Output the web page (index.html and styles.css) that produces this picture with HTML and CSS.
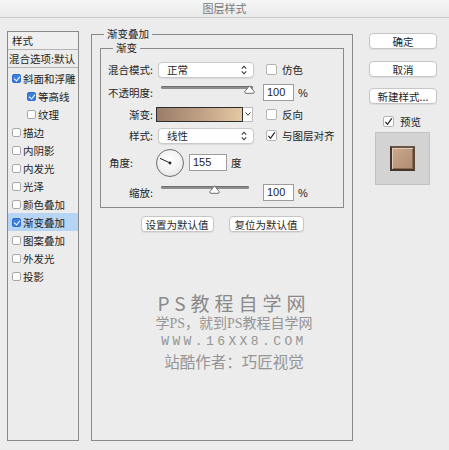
FILE: index.html
```html
<!DOCTYPE html>
<html lang="zh-CN">
<head>
<meta charset="utf-8">
<title>图层样式</title>
<link rel="stylesheet" href="styles.css">
</head>
<body>
<div class="window">
  <div class="titlebar">图层样式</div>
  <div class="content">
    <div class="styles-panel">
      <div class="sp-head">样式</div>
      <div class="sp-blend">混合选项:默认</div>
      <ul class="sp-list">
        <li><span class="cb checked"></span>斜面和浮雕</li>
        <li class="sub"><span class="cb checked"></span>等高线</li>
        <li class="sub"><span class="cb"></span>纹理</li>
        <li><span class="cb"></span>描边</li>
        <li><span class="cb"></span>内阴影</li>
        <li><span class="cb"></span>内发光</li>
        <li><span class="cb"></span>光泽</li>
        <li><span class="cb"></span>颜色叠加</li>
        <li class="active"><span class="cb checked"></span>渐变叠加</li>
        <li><span class="cb"></span>图案叠加</li>
        <li><span class="cb"></span>外发光</li>
        <li><span class="cb"></span>投影</li>
      </ul>
    </div>

    <fieldset class="main">
      <legend>渐变叠加</legend>
      <fieldset class="inner">
        <legend>渐变</legend>
        <div class="rows">
          <div class="row r1">
            <span class="lbl">混合模式:</span>
            <div class="select"><span>正常</span>
              <svg class="updown" width="6" height="10" viewBox="0 0 6 10"><path d="M0.8 3.6 L3 1.2 L5.2 3.6 M0.8 6.4 L3 8.8 L5.2 6.4" fill="none" stroke="#333" stroke-width="1.1"/></svg>
            </div>
            <span class="box"></span><span class="opt">仿色</span>
          </div>
          <div class="row r2">
            <span class="lbl">不透明度:</span>
            <div class="slider s-op"><span class="track"></span>
              <svg class="thumb" style="left:83px" width="11" height="9" viewBox="0 0 11 9"><path d="M5.5 0.8 L10.2 6.6 Q10.5 8.3 9 8.3 L2 8.3 Q0.5 8.3 0.8 6.6 Z" fill="#fff" stroke="#6d6d6d" stroke-width="1"/></svg>
            </div>
            <span class="num">100</span><span class="unit">%</span>
          </div>
          <div class="row r3">
            <span class="lbl">渐变:</span>
            <div class="grad"><span class="swatch"></span><span class="gdd"><svg width="6" height="4" viewBox="0 0 6 4"><path d="M0.5 0.5 L3 3.2 L5.5 0.5" fill="none" stroke="#333" stroke-width="1"/></svg></span></div>
            <span class="box"></span><span class="opt">反向</span>
          </div>
          <div class="row r4">
            <span class="lbl">样式:</span>
            <div class="select"><span>线性</span>
              <svg class="updown" width="6" height="10" viewBox="0 0 6 10"><path d="M0.8 3.6 L3 1.2 L5.2 3.6 M0.8 6.4 L3 8.8 L5.2 6.4" fill="none" stroke="#333" stroke-width="1.1"/></svg>
            </div>
            <span class="box"><svg width="11" height="11" viewBox="0 0 11 11"><path d="M2.3 5.8 L4.5 8.3 L8.8 2.3" fill="none" stroke="#222" stroke-width="1.2"/></svg></span><span class="opt">与图层对齐</span>
          </div>
          <div class="row r5">
            <span class="lbl left">角度:</span>
            <div class="dial"><svg width="28" height="28" viewBox="0 0 28 28"><line x1="14" y1="14" x2="4" y2="9.3" stroke="#222" stroke-width="1"/><circle cx="14" cy="14" r="1.4" fill="#222"/></svg></div>
            <span class="num wide">155</span><span class="unit deg">度</span>
          </div>
          <div class="row r6">
            <span class="lbl">缩放:</span>
            <div class="slider s-sc"><span class="track"></span>
              <svg class="thumb" style="left:48px" width="11" height="9" viewBox="0 0 11 9"><path d="M5.5 0.8 L10.2 6.6 Q10.5 8.3 9 8.3 L2 8.3 Q0.5 8.3 0.8 6.6 Z" fill="#fff" stroke="#6d6d6d" stroke-width="1"/></svg>
            </div>
            <span class="num">100</span><span class="unit">%</span>
          </div>
        </div>
      </fieldset>
      <div class="defaults">
        <span class="btn b-def">设置为默认值</span>
        <span class="btn b-reset">复位为默认值</span>
      </div>
      <div class="watermark">
        <p class="w1">PS教程自学网</p>
        <p class="w2">学PS，就到PS教程自学网</p>
        <p class="w3">WWW.16XX8.COM</p>
        <p class="w4">站酷作者：巧匠视觉</p>
      </div>
    </fieldset>

    <div class="side">
      <span class="btn">确定</span>
      <span class="btn">取消</span>
      <span class="btn">新建样式...</span>
      <div class="preview-opt"><span class="box"><svg width="11" height="11" viewBox="0 0 11 11"><path d="M2.3 5.8 L4.5 8.3 L8.8 2.3" fill="none" stroke="#222" stroke-width="1.2"/></svg></span><span>预览</span></div>
      <div class="preview"><span class="pv-square"></span></div>
    </div>
  </div>
</div>
</body>
</html>
```
FILE: styles.css
```css
* { box-sizing: border-box; margin: 0; padding: 0; }
html, body { width: 449px; height: 450px; overflow: hidden; }
body {
  background: #ececec;
  font-family: "Noto Sans CJK SC", "Noto Sans", sans-serif;
  font-size: 10.5px;
  color: #1e1e1e;
}
.window { width: 449px; height: 450px; }

.titlebar {
  height: 18px;
  line-height: 17px;
  text-align: center;
  font-size: 11px;
  color: #787878;
  background: linear-gradient(#f6f6f6, #e9e9e9);
  border-bottom: 1px solid #cbcbcb;
}

.content { display: flex; align-items: flex-start; padding-left: 7px; }

/* left styles list */
.styles-panel {
  margin-top: 13px;
  width: 72px;
  height: 410px;
  border: 1px solid #8a8a8a;
  overflow: hidden;
  white-space: nowrap;
}
.sp-head {
  height: 18px;
  line-height: 17px;
  padding-left: 4px;
  border-bottom: 1px solid #b4b4b4;
  background: #efefef;
}
.sp-blend {
  height: 18px;
  line-height: 17px;
  padding-left: 1px;
  border-bottom: 1px solid #b4b4b4;
  overflow: hidden;
}
.sp-list { list-style: none; padding-top: 1px; }
.sp-list li {
  height: 18px;
  display: flex;
  align-items: center;
  padding-left: 4px;
}
.sp-list li.sub { padding-left: 19px; }
.sp-list li.active { background: #b6d4f3; }
.cb {
  width: 9px;
  height: 9px;
  margin-right: 2px;
  border: 1px solid #a8a8a8;
  border-radius: 2px;
  background: #fff;
  position: relative;
  flex: none;
}
.cb.checked { background: #3b7fdf; border-color: #2f6ccb; }
.cb.checked::after {
  content: "";
  position: absolute;
  left: 2px;
  top: 0px;
  width: 3px;
  height: 5px;
  border: solid #fff;
  border-width: 0 1.4px 1.4px 0;
  transform: rotate(40deg);
}

/* fieldsets */
fieldset {
  border: 1px solid #8a8a8a;
  padding: 0 8px;
  min-width: 0;
}
legend {
  margin-left: 4px;
  padding: 0 3px;
  line-height: 14px;
  font-size: 10.5px;
}
.main {
  margin-top: 9px;
  margin-left: 12px;
  width: 262px;
  height: 414px;
}
.inner { height: 167px; }

.rows { padding-top: 6px; display: flex; flex-direction: column; }
.row { display: flex; align-items: center; height: 17px; }
.r2 { margin-top: 6px; }
.r3 { margin-top: 5px; height: 16px; }
.r4 { margin-top: 5px; }
.r5 { margin-top: 4px; height: 29px; }
.r6 { margin-top: 7px; }

.lbl { width: 49px; margin-left: -4px; text-align: right; padding-right: 1px; white-space: nowrap; flex: none; }
.lbl.left { text-align: left; padding-left: 4px; }

.select {
  width: 96px;
  height: 16px;
  margin-left: 4px;
  display: flex;
  align-items: center;
  justify-content: space-between;
  padding: 0 6px 0 8px;
  background: #fff;
  border: 1px solid #cacaca;
  border-radius: 4px;
  box-shadow: 0 1px 1px rgba(0,0,0,0.08);
}
.box {
  width: 11px;
  height: 11px;
  margin-left: 12px;
  background: #fff;
  border: 1px solid #b4b4b4;
  border-radius: 2px;
  display: flex;
  flex: none;
}
.box svg { margin: -1px; }
.opt { margin-left: 5px; white-space: nowrap; }

.slider { position: relative; height: 17px; margin-left: 7px; flex: none; }
.s-op { width: 92px; }
.s-sc { width: 88px; }
.track {
  display: block;
  margin-top: 2px;
  height: 3px;
  border-radius: 2px;
  background: #8d8d8d;
  box-shadow: inset 0 1px 0 #6f6f6f;
}
.thumb { position: absolute; top: 1px; }

.num {
  width: 31px;
  height: 17px;
  margin-left: 10px;
  padding-left: 3px;
  line-height: 15px;
  background: #fff;
  border: 1px solid #9c9c9c;
  font-family: "Liberation Sans", Arial, sans-serif;
  font-size: 11px;
  flex: none;
}
.s-sc + .num { margin-left: 14px; }
.num.wide { width: 38px; margin-left: 5px; }
.unit { margin-left: 4px; font-family: "Liberation Sans", Arial, sans-serif; font-size: 11px; }
.unit.deg { font-family: "Noto Sans CJK SC", sans-serif; font-size: 10.5px; }

.grad { display: flex; margin-left: 2px; height: 15px; flex: none; }
.swatch {
  width: 87px;
  height: 15px;
  border: 1px solid #2e2e2e;
  background: linear-gradient(90deg, #9a7d69, #bf9f84 50%, #e4c9a2);
}
.gdd {
  width: 10px;
  height: 15px;
  background: #fff;
  border: 1px solid #bdbdbd;
  border-left: none;
  display: flex;
  align-items: center;
  justify-content: center;
}
.r3 .box { margin-left: 13px; }

.dial {
  width: 28px;
  height: 28px;
  margin-left: 2px;
  border-radius: 50%;
  border: 1px solid #6e6e6e;
  background: radial-gradient(circle at 50% 40%, #ffffff, #f1f1f1 55%, #d9d9d9);
  flex: none;
  display: flex;
}
.dial svg { margin: -1px; }

.defaults { display: flex; justify-content: center; gap: 15px; margin-top: 8px; }
.btn {
  display: flex;
  align-items: center;
  justify-content: center;
  height: 16px;
  background: #fff;
  border: 1px solid #c6c6c6;
  border-radius: 4px;
  box-shadow: 0 1px 1px rgba(0,0,0,0.07);
  white-space: nowrap;
}
.b-def { width: 73px; }
.b-reset { width: 75px; }

.watermark {
  margin-top: 60px;
  padding-left: 24px;
  text-align: center;
  color: #959595;
}
.w1 {
  font-size: 19px;
  line-height: 21px;
  letter-spacing: 5px;
  color: #8a8a8a;
}
.w2 {
  font-size: 14px;
  line-height: 19px;
  padding-top: 1px;
  font-family: "Liberation Serif", "Noto Sans CJK SC", serif;
}
.w3 {
  font-size: 13px;
  line-height: 17px;
  letter-spacing: 3.4px;
  font-family: "Liberation Mono", monospace;
}
.w4 { font-size: 15.5px; line-height: 21px; padding-top: 1px; letter-spacing: 0; }

/* right side */
.side {
  margin-left: 16px;
  margin-top: 15px;
  width: 68px;
  display: flex;
  flex-direction: column;
}
.side .btn + .btn { margin-top: 12px; }
.side .btn:nth-child(3) { margin-top: 11px; }
.preview-opt {
  margin-top: 10px;
  height: 14px;
  display: flex;
  align-items: center;
  padding-left: 14px;
}
.preview-opt .box { margin-left: 0; margin-right: 6px; }
.preview {
  margin-top: 4px;
  margin-left: 6px;
  width: 55px;
  height: 53px;
  background: #d3d3d3;
  border: 1px solid #c2c2c2;
  display: flex;
  align-items: center;
  justify-content: center;
}
.pv-square {
  width: 25px;
  height: 25px;
  border: 2px solid #45352a;
  border-top-color: #6a5646;
  border-right-color: #5a4838;
  background: linear-gradient(135deg, #c9a98f, #b08c72);
  box-shadow: inset 1px 1px 0 #e2cbb6, inset -1px -1px 0 #8a6c55;
}
```
